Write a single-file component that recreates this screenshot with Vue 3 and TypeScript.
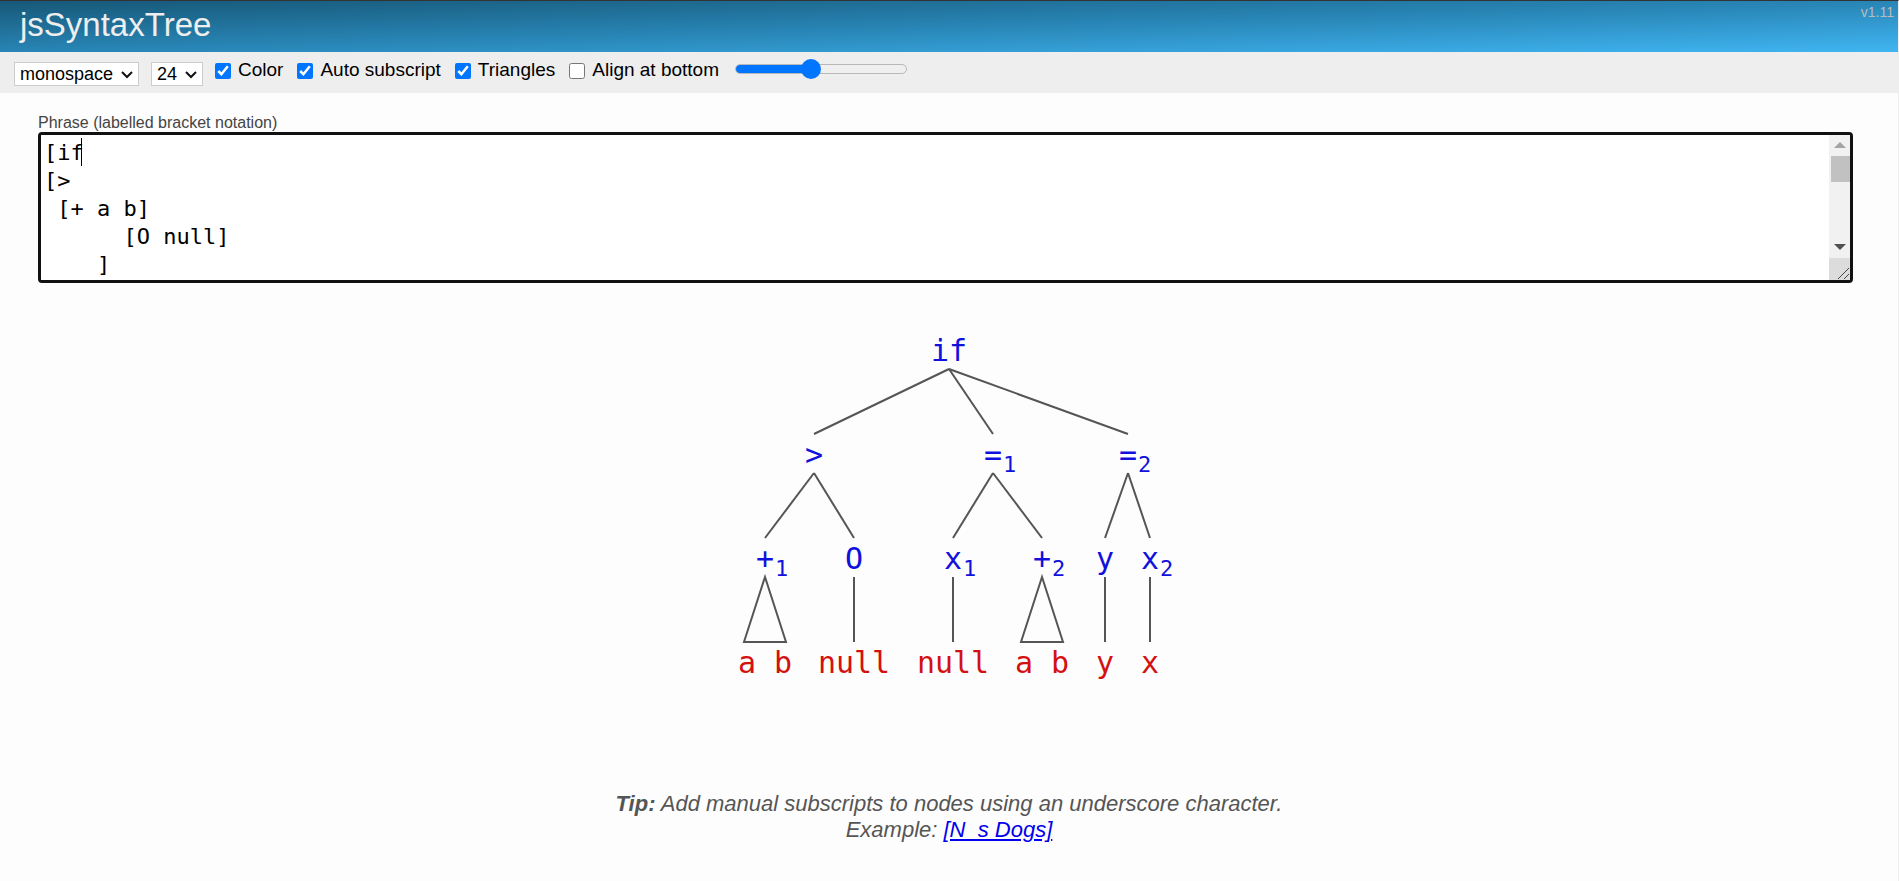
<script setup lang="ts">
import { ref } from 'vue'

interface TreeNode {
  id: string
  label: string
  sub?: string
  x: number
  level: number
  leaf?: boolean
  parent?: string
  triangle?: boolean
}

const font = ref('monospace')
const size = ref('24')
const color = ref(true)
const subscript = ref(true)
const triangles = ref(true)
const bottom = ref(false)
const spacing = ref(43)

const phrase = ref(`[if
[>
 [+ a b]
      [O null]
    ]
    [=
      [x null]
      [+ a b]
    ]
    [=
      [y y]
      [x x]
    ]
]
`)

const levelHeight = 104
const nodes: TreeNode[] = [
  { id: 'if', label: 'if', x: 229, level: 0 },
  { id: 'gt', label: '>', x: 94, level: 1, parent: 'if' },
  { id: 'eq1', label: '=', sub: '1', x: 273, level: 1, parent: 'if' },
  { id: 'eq2', label: '=', sub: '2', x: 408, level: 1, parent: 'if' },
  { id: 'plus1', label: '+', sub: '1', x: 45, level: 2, parent: 'gt' },
  { id: 'o', label: 'O', x: 134, level: 2, parent: 'gt' },
  { id: 'x1', label: 'x', sub: '1', x: 233, level: 2, parent: 'eq1' },
  { id: 'plus2', label: '+', sub: '2', x: 322, level: 2, parent: 'eq1' },
  { id: 'y', label: 'y', x: 385, level: 2, parent: 'eq2' },
  { id: 'x2', label: 'x', sub: '2', x: 430, level: 2, parent: 'eq2' },
  { id: 'ab1', label: 'a b', x: 45, level: 3, leaf: true, parent: 'plus1', triangle: true },
  { id: 'null1', label: 'null', x: 134, level: 3, leaf: true, parent: 'o' },
  { id: 'null2', label: 'null', x: 233, level: 3, leaf: true, parent: 'x1' },
  { id: 'ab2', label: 'a b', x: 322, level: 3, leaf: true, parent: 'plus2', triangle: true },
  { id: 'leafy', label: 'y', x: 385, level: 3, leaf: true, parent: 'y' },
  { id: 'leafx', label: 'x', x: 430, level: 3, leaf: true, parent: 'x2' },
]

const baseline = (n: TreeNode) => 41 + n.level * levelHeight

const edges = nodes
  .filter((n) => n.parent)
  .map((n) => {
    const p = nodes.find((m) => m.id === n.parent)!
    const top = 49 + p.level * levelHeight
    const end = top + 65
    return n.triangle
      ? `M${p.x} ${top}L${n.x - 21} ${end}H${n.x + 21}Z`
      : `M${p.x} ${top}L${n.x} ${end}`
  })
</script>

<template>
  <div class="page">
    <header class="header">
      <h1>jsSyntaxTree</h1>
      <span class="version">v1.11</span>
    </header>

    <div class="toolbar">
      <div class="select">
        <select v-model="font" aria-label="Font">
          <option>monospace</option>
          <option>sans-serif</option>
          <option>serif</option>
        </select>
        <svg viewBox="0 0 12 8" aria-hidden="true"><path d="M1 1l5 5 5-5" /></svg>
      </div>
      <div class="select">
        <select v-model="size" aria-label="Font size">
          <option>16</option>
          <option>24</option>
          <option>32</option>
        </select>
        <svg viewBox="0 0 12 8" aria-hidden="true"><path d="M1 1l5 5 5-5" /></svg>
      </div>
      <div class="options">
        <label><input v-model="color" type="checkbox" />Color</label>
        <label><input v-model="subscript" type="checkbox" />Auto subscript</label>
        <label><input v-model="triangles" type="checkbox" />Triangles</label>
        <label><input v-model="bottom" type="checkbox" />Align at bottom</label>
      </div>
      <input
        v-model.number="spacing"
        class="slider"
        type="range"
        min="0"
        max="100"
        aria-label="Spacing"
        :style="{ '--fill': spacing + '%' }"
      />
    </div>

    <main>
      <div class="editor">
        <label for="phrase">Phrase (labelled bracket notation)</label>
        <div class="field">
          <textarea id="phrase" v-model="phrase" rows="5" spellcheck="false"></textarea>
          <span class="caret"></span>
          <div class="scrollbar" aria-hidden="true">
            <svg class="arrow up" viewBox="0 0 12 6"><path d="M0 6L6 0l6 6z" /></svg>
            <span class="thumb"></span>
            <svg class="arrow down" viewBox="0 0 12 6"><path d="M0 0l6 6 6-6z" /></svg>
            <svg class="grip" viewBox="0 0 21 22"><path d="M9 21L20 10M15 21l5-5" /></svg>
          </div>
        </div>
      </div>

      <svg class="tree" width="458" height="372" viewBox="0 0 458 372" role="img" aria-label="Syntax tree">
        <path v-for="(d, i) in edges" :key="i" class="edge" :d="d" />
        <g v-for="n in nodes" :key="n.id" :class="n.leaf ? 'leaf' : 'branch'">
          <text :x="n.x" :y="baseline(n)" text-anchor="middle">{{ n.label }}</text>
          <text v-if="n.sub" class="sub" :x="n.x + 10" :y="baseline(n) + 7">{{ n.sub }}</text>
        </g>
      </svg>

      <p class="tip">
        <b>Tip:</b> Add manual subscripts to nodes using an underscore character.<br />
        Example: <a href="#">[N_s Dogs]</a>
      </p>
    </main>
  </div>
</template>

<style>
body {
  background: #fdfdfd;
}
</style>

<style scoped>
.page {
  min-height: 100vh;
  box-sizing: border-box;
  border-top: 1px solid #333;
  border-right: 1px solid #eee;
  font-family: "Liberation Sans", Arial, sans-serif;
  color: #000;
}
.header {
  display: flex;
  justify-content: space-between;
  height: 51px;
  padding: 0 4px 0 20px;
  background: linear-gradient(to bottom right, #175878 0%, #2885b5 50%, #40b5f2 100%);
}
h1 {
  margin: 0;
  font-size: 33px;
  font-weight: 400;
  line-height: 48px;
  color: #eee;
}
.version {
  font-size: 14px;
  line-height: 22px;
  color: #bbb;
}
.toolbar {
  display: flex;
  height: 41px;
  padding-left: 14px;
  background: #eee;
}
.select {
  position: relative;
  margin: 10px 12px 0 0;
}
select {
  display: block;
  appearance: none;
  height: 24px;
  box-sizing: border-box;
  padding: 0 24px 0 5px;
  border: 1px solid #ccc;
  border-radius: 0;
  background: #fff;
  color: #000;
  font: 18px/22px "Liberation Sans", Arial, sans-serif;
}
.select svg {
  position: absolute;
  right: 6px;
  top: 9px;
  width: 12px;
  height: 8px;
  fill: none;
  stroke: #111;
  stroke-width: 2;
  pointer-events: none;
}
.options {
  display: flex;
  gap: 14px;
  font-size: 19px;
  line-height: 35px;
}
.options label {
  display: flex;
}
.options input {
  width: 16px;
  height: 16px;
  margin: 11px 7px 0 0;
}
.slider {
  appearance: none;
  width: 172px;
  height: 22px;
  margin: 6px 0 0 16px;
  background: transparent;
}
.slider::-webkit-slider-runnable-track {
  height: 10px;
  box-sizing: border-box;
  border: 1px solid #b8b8b8;
  border-radius: 5px;
  background: linear-gradient(to right, #0075ff var(--fill), #efefef var(--fill)) border-box;
}
.slider::-webkit-slider-thumb {
  appearance: none;
  width: 20px;
  height: 20px;
  margin-top: -6px;
  border-radius: 50%;
  background: #0075ff;
}
main {
  padding: 20px 0 0;
}
.editor {
  margin: 0 45px 0 38px;
}
.editor label {
  display: block;
  font-size: 16px;
  line-height: 19px;
  color: #444;
}
.field {
  position: relative;
}
textarea {
  display: block;
  width: 100%;
  height: 151px;
  box-sizing: border-box;
  padding: 4px 24px 4px 3px;
  border: 3px solid #111;
  border-radius: 4px;
  outline: none;
  background: #fff;
  color: #000;
  caret-color: transparent;
  font: 22px/28px "DejaVu Sans Mono", monospace;
  resize: vertical;
  overflow-y: scroll;
}
.caret {
  position: absolute;
  left: 43px;
  top: 6px;
  width: 1px;
  height: 28px;
  background: #000;
}
.scrollbar {
  position: absolute;
  top: 3px;
  right: 3px;
  bottom: 3px;
  width: 21px;
  display: flex;
  flex-direction: column;
  align-items: center;
  background: #f1f1f1;
  pointer-events: none;
}
.arrow {
  width: 12px;
  height: 6px;
  flex: none;
}
.up {
  margin: 7px 0 8px;
  fill: #a3a3a3;
}
.thumb {
  align-self: flex-end;
  width: 19px;
  height: 26px;
  background: #c1c1c1;
}
.down {
  margin: auto 0 8px;
  fill: #505050;
}
.grip {
  width: 21px;
  height: 22px;
  flex: none;
  background: #dcdcdc;
  fill: none;
  stroke: #444;
}
.tree {
  display: block;
  margin: 37px auto 0;
  font-family: "DejaVu Sans Mono", monospace;
  font-size: 30px;
}
.edge {
  fill: none;
  stroke: #555;
  stroke-width: 2;
}
.branch {
  fill: #1111dd;
}
.leaf {
  fill: #d41111;
}
.sub {
  font-size: 22px;
}
.tip {
  margin: 99px 0 0;
  text-align: center;
  font-size: 22px;
  font-style: italic;
  line-height: 26px;
  color: #555;
}
.tip a {
  color: #0000ee;
}
</style>
